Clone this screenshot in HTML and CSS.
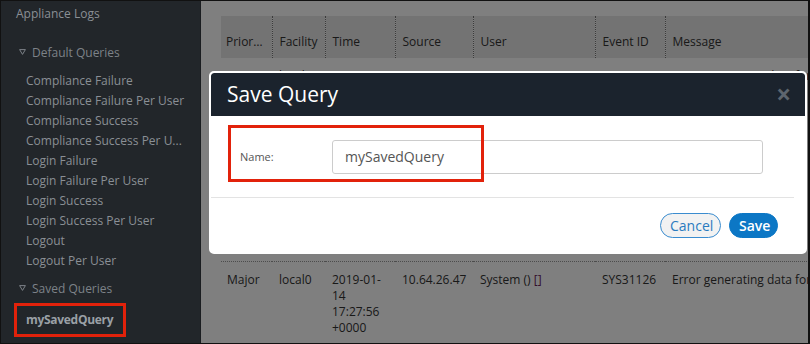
FILE: index.html
```html
<!DOCTYPE html>
<html lang="en">
<head>
  <meta charset="UTF-8">
  <title>Appliance Logs - Save Query</title>
  <link rel="stylesheet" href="styles.css">
</head>
<body>
  <div class="frame">
    <aside class="sidebar">
      <div class="side-title">Appliance Logs</div>

      <div class="group-title">
        <svg class="caret" width="7" height="6" viewBox="0 0 7 6"><path d="M0.6 0.6 H6.4 L3.5 5.4 Z" fill="none" stroke="#7d8288" stroke-width="1"/></svg>
        Default Queries
      </div>
      <ul class="query-list">
        <li>Compliance Failure</li>
        <li>Compliance Failure Per User</li>
        <li>Compliance Success</li>
        <li>Compliance Success Per U...</li>
        <li>Login Failure</li>
        <li>Login Failure Per User</li>
        <li>Login Success</li>
        <li>Login Success Per User</li>
        <li>Logout</li>
        <li>Logout Per User</li>
      </ul>

      <div class="group-title saved">
        <svg class="caret" width="7" height="6" viewBox="0 0 7 6"><path d="M0.6 0.6 H6.4 L3.5 5.4 Z" fill="none" stroke="#7d8288" stroke-width="1"/></svg>
        Saved Queries
      </div>
      <div class="saved-item">mySavedQuery</div>
    </aside>

    <main class="content">
      <table class="log-table">
        <colgroup>
          <col class="c-pri"><col class="c-fac"><col class="c-time"><col class="c-src">
          <col class="c-user"><col class="c-evt"><col class="c-msg">
        </colgroup>
        <thead>
          <tr>
            <th>Priority</th>
            <th>Facility</th>
            <th>Time</th>
            <th>Source</th>
            <th>User</th>
            <th>Event ID</th>
            <th>Message</th>
          </tr>
        </thead>
        <tbody>
          <tr class="row-tall">
            <td>Major</td>
            <td>local0</td>
            <td>2019-01-14 17:28:02 +0000</td>
            <td>10.64.26.47</td>
            <td>System () []</td>
            <td>SYS31126</td>
            <td>Error generating data for report</td>
          </tr>
          <tr>
            <td>Major</td>
            <td>local0</td>
            <td>2019-01-14 17:27:56 +0000</td>
            <td>10.64.26.47</td>
            <td>System () <span class="brk">[]</span></td>
            <td>SYS31126</td>
            <td>Error generating data for report</td>
          </tr>
        </tbody>
      </table>
      <div class="backdrop"></div>
    </main>

    <div class="modal">
      <div class="modal-header">
        <span class="modal-title">Save Query</span>
        <span class="modal-close">&times;</span>
      </div>
      <div class="modal-body">
        <label class="field-label" for="queryName">Name:</label>
        <input class="field-input" id="queryName" type="text" value="mySavedQuery">
      </div>
      <div class="modal-footer">
        <button class="btn btn-cancel">Cancel</button>
        <button class="btn btn-save">Save</button>
      </div>
      <div class="callout"></div>
    </div>
  </div>
</body>
</html>
```

FILE: styles.css
```css
* {
  box-sizing: border-box;
}

body {
  margin: 0;
  font-family: 'Open Sans', 'Noto Sans', sans-serif;
  background: #000;
}

.frame {
  position: relative;
  display: flex;
  width: 810px;
  height: 344px;
  border: 1px solid #111;
  border-right-width: 2px;
  overflow: hidden;
}

/* sidebar */

.sidebar {
  width: 200px;
  flex: none;
  background: #22262a;
  color: #8a8f95;
  font-size: 12px;
  line-height: 20px;
  border-right: 1px solid #1a1d20;
}

.side-title {
  padding: 3px 0 0 15px;
}

.group-title {
  display: flex;
  align-items: center;
  gap: 6px;
  margin-top: 19px;
  padding-left: 18px;
  color: #7d8288;
}

.group-title.saved {
  margin-top: 8px;
}

.caret {
  margin-top: -3px;
}

.query-list {
  list-style: none;
  margin: 8px 0 0;
  padding: 0 0 0 25px;
}

.query-list li {
  white-space: nowrap;
}

.saved-item {
  display: inline-block;
  margin: 4px 0 0 13px;
  padding: 0 10px 0 9px;
  height: 34px;
  line-height: 28px;
  border: 3px solid #e2220b;
  font-weight: 700;
  color: #9aa0a6;
  letter-spacing: -0.3px;
}

/* main log table */

.content {
  position: relative;
  flex: 1;
  background: #fff;
  padding: 15px 0 0 20px;
  overflow: hidden;
}

.log-table {
  table-layout: fixed;
  border-collapse: collapse;
  width: 744px;
  color: #333;
  font-size: 12px;
}

.c-pri { width: 51px; }
.c-fac { width: 53px; }
.c-time { width: 70px; }
.c-src { width: 78px; }
.c-user { width: 122px; }
.c-evt { width: 70px; }
.c-msg { width: 300px; }

.log-table th {
  background: #e6e6e6;
  height: 42px;
  padding: 8px 6px 0 7px;
  text-align: left;
  font-weight: 400;
  white-space: nowrap;
  overflow: hidden;
  text-overflow: ellipsis;
  border-right: 1px dotted #777;
}

.log-table th:first-child {
  padding-left: 5px;
}

.log-table td {
  vertical-align: top;
  padding: 10px 6px 0 7px;
  line-height: 16px;
  border-top: 1px dotted #999;
  overflow: hidden;
}

.log-table td:first-child {
  padding-left: 6px;
}

.log-table td:last-child {
  white-space: nowrap;
}

.row-tall td {
  height: 203px;
  border-top: none;
}

.brk {
  color: #6a1d5a;
}

.backdrop {
  position: absolute;
  inset: 0;
  background: rgba(0, 0, 0, 0.5);
}

/* save query dialog */

.modal {
  position: absolute;
  left: 208px;
  top: 70px;
  width: 598px;
  height: 183px;
  background: #fff;
  border: 2px solid #fff;
  border-radius: 5px;
  overflow: hidden;
}

.modal-header {
  display: flex;
  align-items: center;
  justify-content: space-between;
  height: 43px;
  padding: 0 14px 2px 16px;
  background: #1b232d;
  border-radius: 3px 3px 0 0;
}

.modal-title {
  color: #fff;
  font-size: 21px;
}

.modal-close {
  color: #5d656e;
  font-size: 26px;
  font-weight: 700;
  line-height: 1;
}

.modal-body {
  display: flex;
  align-items: center;
  height: 81px;
  padding: 0 42px 0 29px;
}

.field-label {
  width: 92px;
  flex: none;
  font-size: 11px;
  color: #555;
}

.field-input {
  flex: 1;
  height: 34px;
  border: 1px solid #ccc;
  border-radius: 3px;
  padding: 0 12px;
  font-family: inherit;
  font-size: 14px;
  color: #555;
}

.modal-footer {
  display: flex;
  justify-content: flex-end;
  gap: 8px;
  margin-right: 11px;
  padding: 15px 16px 0 0;
  border-top: 1px solid #e3e3e3;
}

.btn {
  height: 25px;
  border-radius: 13px;
  font-family: inherit;
  font-size: 14px;
  padding: 0 9px;
  line-height: 21px;
  cursor: pointer;
}

.btn-cancel {
  width: 61px;
  background: #f2f2f2;
  border: 1px solid #3a8ccf;
  color: #2b7bbf;
}

.btn-save {
  width: 49px;
  background: #0c77c5;
  border: 1px solid #0c77c5;
  color: #fff;
  font-weight: 600;
}

.callout {
  position: absolute;
  left: 17px;
  top: 52px;
  width: 256px;
  height: 57px;
  border: 3px solid #e2220b;
}
```
